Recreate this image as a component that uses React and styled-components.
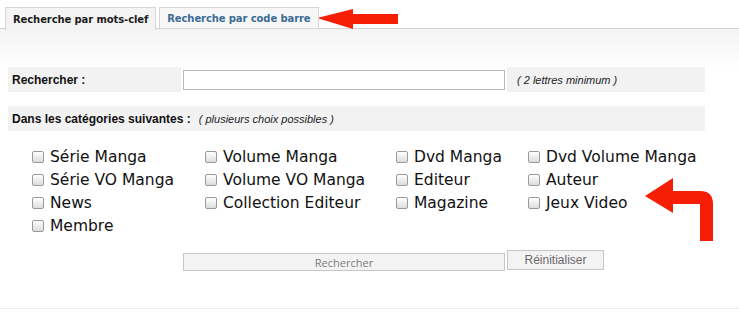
import React from 'react';
import styled, { createGlobalStyle } from 'styled-components';

const categories = [
  ['Série Manga', 'Volume Manga', 'Dvd Manga', 'Dvd Volume Manga'],
  ['Série VO Manga', 'Volume VO Manga', 'Editeur', 'Auteur'],
  ['News', 'Collection Editeur', 'Magazine', 'Jeux Video'],
  ['Membre'],
];

export default function App() {
  return (
    <Page>
      <GlobalStyle />
      <TabBar>
        <Tab $active>Recherche par mots-clef</Tab>
        <Tab>Recherche par code barre</Tab>
      </TabBar>

      <Panel>
        <FormRow>
          <LabelCell>Rechercher :</LabelCell>
          <InputCell>
            <SearchInput type="text" />
          </InputCell>
          <HintCell>( 2 lettres minimum )</HintCell>
        </FormRow>

        <WideRow>
          <LabelCell as="span">Dans les catégories suivantes :</LabelCell>
          <Hint>( plusieurs choix possibles )</Hint>
        </WideRow>

        <CheckGrid>
          {categories.flat().map((name) => (
            <CheckItem key={name}>
              <Box type="checkbox" />
              {name}
            </CheckItem>
          ))}
        </CheckGrid>

        <ButtonRow>
          <SubmitBtn>Rechercher</SubmitBtn>
          <ResetBtn>Réinitialiser</ResetBtn>
        </ButtonRow>
      </Panel>

      <Arrows width="739" height="319" viewBox="0 0 739 319">
        <polygon fill="#f71e06" points="317,18 353,9 353,14 398,14 398,24 353,24 353,29" />
        <path
          fill="#f71e06"
          d="M645,196 L673,178 L673,191 L700,191 Q713,191 713,204 L713,241 L700,241 L700,204 L673,204 L673,213 Z"
        />
      </Arrows>
    </Page>
  );
}

const GlobalStyle = createGlobalStyle`
  body {
    margin: 0;
    background: #fff;
    font-family: "Liberation Sans", Arial, sans-serif;
  }
`;

const Page = styled.div`
  position: relative;
  width: 739px;
  height: 319px;
  overflow: hidden;
`;

const TabBar = styled.div`
  display: flex;
  gap: 3px;
  padding: 7px 0 0 5px;
  border-bottom: 1px solid #d3d3d3;
  height: 21px;
`;

const Tab = styled.div`
  height: ${(p) => (p.$active ? '22px' : '20px')};
  padding: 0 7px;
  display: flex;
  align-items: center;
  border: 1px solid #d6d6d6;
  border-bottom: ${(p) => (p.$active ? 'none' : '1px solid #d6d6d6')};
  background: ${(p) => (p.$active ? '#f4f4f4' : '#f7f7f7')};
  color: ${(p) => (p.$active ? '#1c1c1c' : '#3a6b94')};
  font-family: "DejaVu Sans", Verdana, sans-serif;
  font-weight: bold;
  font-size: 10px;
  letter-spacing: -0.1px;
  z-index: 1;
`;

const Panel = styled.div`
  background: linear-gradient(#f4f4f4, #ffffff 40px);
  padding: 38px 0 0 8px;
  height: 241px;
  border-bottom: 1px solid #ececec;
`;

const FormRow = styled.div`
  display: grid;
  grid-template-columns: 173px 326px 198px;
  width: 697px;
  height: 25px;
`;

const LabelCell = styled.div`
  background: #f2f2f2;
  display: flex;
  align-items: center;
  padding-left: 4px;
  font-weight: bold;
  font-size: 12px;
  color: #111;
`;

const InputCell = styled.div`
  display: flex;
  align-items: center;
  padding-left: 2px;
`;

const SearchInput = styled.input`
  box-sizing: border-box;
  width: 322px;
  height: 20px;
  border: 1px solid #b8b8b8;
  background: #fff;
  margin: 0;
`;

const HintCell = styled.div`
  background: #f2f2f2;
  display: flex;
  align-items: center;
  padding-left: 10px;
  font-style: italic;
  font-size: 11px;
  color: #222;
`;

const WideRow = styled.div`
  display: flex;
  align-items: center;
  width: 697px;
  height: 25px;
  margin-top: 14px;
  background: #f2f2f2;
  ${LabelCell} {
    background: none;
  }
`;

const Hint = styled.span`
  margin-left: 8px;
  font-style: italic;
  font-size: 11px;
  color: #222;
`;

const CheckGrid = styled.div`
  display: grid;
  grid-template-columns: 173px 191px 132px 180px;
  grid-auto-rows: 23px;
  margin: 14px 0 0 24px;
`;

const CheckItem = styled.label`
  display: flex;
  align-items: center;
  gap: 6px;
  font-family: "DejaVu Sans", Verdana, sans-serif;
  font-size: 15.5px;
  color: #111;
  white-space: nowrap;
`;

const Box = styled.input`
  appearance: none;
  margin: 0;
  width: 12px;
  height: 12px;
  border: 1px solid #9a9a9a;
  border-radius: 2px;
  background: linear-gradient(#ffffff, #dcdcdc);
  box-sizing: border-box;
`;

const ButtonRow = styled.div`
  display: flex;
  align-items: flex-start;
  gap: 2px;
  margin: 13px 0 0 175px;
`;

const SubmitBtn = styled.button`
  box-sizing: border-box;
  width: 322px;
  height: 18px;
  margin-top: 3px;
  border: 1px solid #c6c6c6;
  background: #f3f3f3;
  color: #7a7a7a;
  font-family: "Open Sans", sans-serif;
  font-size: 11px;
  padding: 0;
`;

const ResetBtn = styled.button`
  box-sizing: border-box;
  width: 97px;
  height: 20px;
  border: 1px solid #c6c6c6;
  background: #f3f3f3;
  color: #6a6a6a;
  font-family: "Liberation Sans", Arial, sans-serif;
  font-size: 12px;
  padding: 0;
`;

const Arrows = styled.svg`
  position: absolute;
  left: 0;
  top: 0;
  pointer-events: none;
`;
